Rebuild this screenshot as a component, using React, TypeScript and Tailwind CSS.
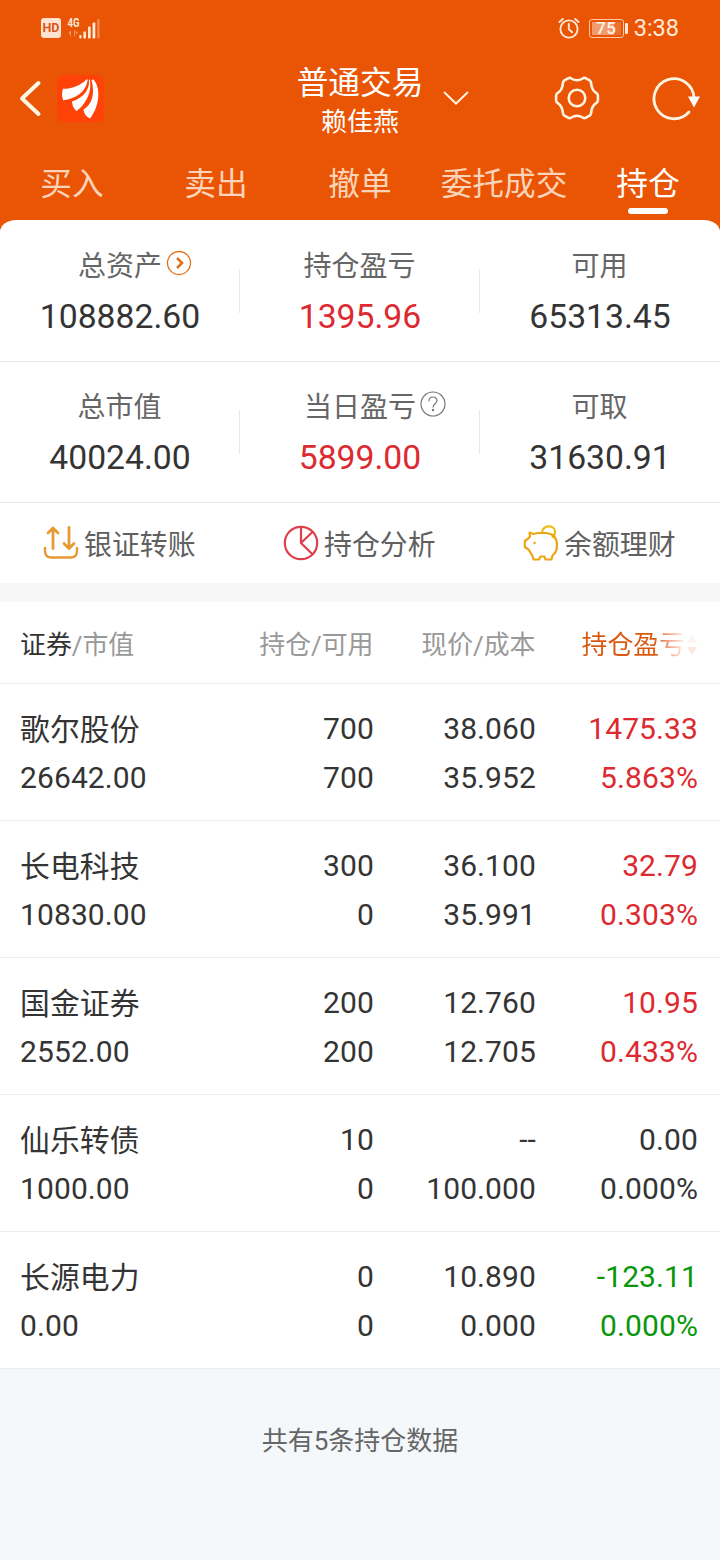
import React from "react";

const tabs = ["买入", "卖出", "撤单", "委托成交", "持仓"];

type Tone = "red" | "green" | "dark";
const toneClass: Record<Tone, string> = {
  red: "text-[#dc2a30]",
  green: "text-[#0a960a]",
  dark: "text-[#343434]",
};

type Holding = {
  name: string;
  value: string;
  held: string;
  free: string;
  price: string;
  cost: string;
  gain: string;
  rate: string;
  tone: Tone;
};

const holdings: Holding[] = [
  { name: "歌尔股份", value: "26642.00", held: "700", free: "700", price: "38.060", cost: "35.952", gain: "1475.33", rate: "5.863%", tone: "red" },
  { name: "长电科技", value: "10830.00", held: "300", free: "0", price: "36.100", cost: "35.991", gain: "32.79", rate: "0.303%", tone: "red" },
  { name: "国金证券", value: "2552.00", held: "200", free: "200", price: "12.760", cost: "12.705", gain: "10.95", rate: "0.433%", tone: "red" },
  { name: "仙乐转债", value: "1000.00", held: "10", free: "0", price: "--", cost: "100.000", gain: "0.00", rate: "0.000%", tone: "dark" },
  { name: "长源电力", value: "0.00", held: "0", free: "0", price: "10.890", cost: "0.000", gain: "-123.11", rate: "0.000%", tone: "green" },
];

function StatusBar() {
  return (
    <div className="flex h-[56px] items-center justify-between pr-[41px] pl-[41px] text-[#ffe9d8]">
      <div className="flex items-center">
        <div className="flex h-5 w-5 items-center justify-center rounded-[3px] bg-[#ffe3d0] text-[12.500px] leading-none font-bold text-[#d4581a]">HD</div>
        <svg className="ml-[6px]" width="35" height="26" viewBox="0 0 35 26" fill="#ffe9d8">
          <text x="0.5" y="11.8" fontSize="12.5" fontWeight="700" fontFamily="Roboto, sans-serif" textLength="12" lengthAdjust="spacingAndGlyphs">4G</text>
          <path d="M1 18.5l3-3.2v5.7H3v-2.5zM7 15.5h1v5.2l-1 1zM10.2 18.5H8.5v-3l3 3z" opacity=".45" />
          <rect x="12.3" y="20" width="2.2" height="3.5" rx=".8" />
          <rect x="16.4" y="16.4" width="2.6" height="7.1" rx=".8" />
          <rect x="21" y="11.6" width="2.7" height="11.9" rx=".8" />
          <rect x="25.6" y="7.6" width="2.7" height="15.9" rx=".8" />
          <rect x="30.2" y="4" width="2.4" height="19.5" rx=".8" opacity=".35" />
        </svg>
      </div>
      <div className="flex items-center">
        <svg width="22" height="22" viewBox="0 0 22 22" fill="none" stroke="#ffe9d8" strokeWidth="1.9" strokeLinecap="round" strokeLinejoin="round">
          <circle cx="11" cy="12" r="8.6" />
          <path d="M10.8 7v5.2l3.4 3M1.5 5l3.3-3M17.2 2l3.3 3" />
        </svg>
        <div className="ml-[9px] flex h-[19px] w-[35px] items-center rounded-[3px] border border-[#ffc9a6] p-[2px]">
          <div className="flex h-full w-[29px] items-center justify-center bg-linear-to-r from-[#f29c6e] from-75% to-[#ec7030] to-75% text-[17px] leading-none font-medium tracking-[0.5px] text-[#fff4ea]">75</div>
        </div>
        <div className="ml-[1px] h-[11px] w-[3px] rounded-[1px] bg-[#ffe9d8]" />
        <div className="ml-[6px] text-[23.500px] leading-7">3:38</div>
      </div>
    </div>
  );
}

function TitleBar() {
  return (
    <div className="grid h-[92px] grid-cols-[1fr_240px_1fr] text-white">
      <div className="flex items-center pb-[6px] pl-[19px]">
        <svg width="24" height="38" viewBox="0 0 24 38" fill="none" stroke="#fff7e6" strokeWidth="4" strokeLinecap="round" strokeLinejoin="round">
          <path d="M19.500 3L3 18.500l16.500 15.500" />
        </svg>
        <svg className="ml-[14px]" width="48" height="48" viewBox="0 0 48 48">
          <rect width="47" height="47" rx="7" fill="#ff4208" />
          <g fill="#fff">
            <path d="M29.500 4.500C23 11 14 14 6 13.800C4.800 17.500 4.600 21.500 6.200 25.300C18 24 29 17.500 30.800 4.500Z" />
            <path d="M32 4.500C33 15 26 23 15 26.500C15.300 30.500 16.500 33.500 19.500 36.200C27 30.500 35.500 19 32.800 4.500Z" />
            <path d="M34.500 5C38.500 20 34.500 29.500 26.500 34.500C27 39 29.500 42 33 43.500C41.500 33 45 14.500 36.500 4.500Z" />
          </g>
        </svg>
      </div>
      <div className="flex justify-center">
        <div className="mr-[-46px] flex items-center">
          <div className="pb-[2px] text-center">
            <div className="pt-[1px] text-[31.700px] leading-[42px]">普通交易</div>
            <div className="text-[26px] leading-[35px]">赖佳燕</div>
          </div>
          <svg className="mt-[-9px] ml-[20px]" width="26" height="16" viewBox="0 0 26 16" fill="none" stroke="#fff4e2" strokeWidth="2">
            <path d="M1 2l12 11.500L25 2" />
          </svg>
        </div>
      </div>
      <div className="flex items-center justify-end pr-[20px] pb-[8px]">
        <svg width="46" height="44" viewBox="0 0 46 44" fill="none" stroke="#fff4e2" strokeWidth="2.600" strokeLinejoin="round">
          <circle cx="23" cy="22" r="8.300" />
          <path d="M14.500 2.100Q16 1.500 17.300 2.500C21 4.800 25 4.800 28.700 2.500Q30 1.500 31.500 2.100L36 4.700Q37 5.500 37.200 7.500C37.500 12 39 15 42.500 17.200Q43.800 18 43.900 19.500V24.500Q43.800 26 42.500 26.800C39 29 37.500 32 37.200 36.500Q37 38.500 36 39.300L31.500 41.900Q30 42.500 28.700 41.500C25 39.200 21 39.200 17.300 41.500Q16 42.500 14.500 41.900L10 39.300Q9 38.500 8.800 36.500C8.500 32 7 29 3.500 26.800Q2.200 26 2.100 24.500V19.500Q2.200 18 3.500 17.200C7 15 8.500 12 8.800 7.500Q9 5.500 10 4.700Z" />
        </svg>
        <svg className="mt-[2px] mr-[-1px] ml-[52px]" width="49" height="44" viewBox="0 0 49 44" fill="none" stroke="#fff4e2" strokeWidth="2.800">
          <path d="M42 21A20 20 0 1 0 37 35" strokeLinecap="round" />
          <path d="M36 19.500h12l-6 11z" fill="#fff" stroke="none" />
        </svg>
      </div>
    </div>
  );
}

function Tabs() {
  return (
    <div className="grid h-[72px] grid-cols-5">
      {tabs.map((tab) => {
        const active = tab === "持仓";
        return (
          <div key={tab} className="flex flex-col items-center pt-[14px]">
            <span className={active ? "text-[31.700px] leading-[46px] text-white" : "text-[31.700px] leading-[46px] text-[#fbd3b8]"}>{tab}</span>
            {active && <span className="h-[6px] w-[40px] rounded-full bg-white" />}
          </div>
        );
      })}
    </div>
  );
}

function ArrowBadge() {
  return (
    <svg width="26" height="26" viewBox="0 0 26 26" fill="none" stroke="#e0711f">
      <circle cx="13" cy="13" r="11.500" strokeWidth="1.300" />
      <path d="M11 8l5 5-5 5" strokeWidth="2.600" />
    </svg>
  );
}

function HelpBadge() {
  return (
    <svg width="26" height="26" viewBox="0 0 26 26" fill="none" stroke="#777" strokeWidth="1.200">
      <circle cx="13" cy="13" r="12" />
      <path d="M9 10.200C9 4.700 17 4.700 17 9.800C17 12.600 13 12.600 13 16.500" />
      <circle cx="13" cy="19" r=".6" fill="#777" />
    </svg>
  );
}

function Metric({ label, value, tone = "dark", badge, divided }: { label: string; value: string; tone?: Tone; badge?: React.ReactNode; divided?: boolean }) {
  return (
    <div className="flex items-center">
      <div className="flex grow flex-col items-center pt-[3px]">
        <div className="flex items-center text-[28px] leading-[40px] text-[#666]">
          <span className="ml-[-1px]">{label}</span>
          {badge && <span className="mr-[-31px] mb-[7px] ml-[4px] leading-none">{badge}</span>}
        </div>
        <div className={`mt-[8px] text-[33.700px] leading-[44px] ${toneClass[tone]}`}>{value}</div>
      </div>
      {divided && <div className="ml-[-1px] h-[44px] w-px bg-[#e8e8e8]" />}
    </div>
  );
}

function TransferIcon() {
  return (
    <svg width="36" height="36" viewBox="0 0 36 36" fill="none" stroke="#e69a32" strokeWidth="2.800" strokeLinecap="round" strokeLinejoin="round">
      <path d="M10 23.500V3M5 8l5-5 5 5M26 2.500V23M21 18.500l5 5 5-5" />
      <path d="M2 23v3Q2 32.500 8.500 32.500H27.500Q34 32.500 34 26V23" strokeWidth="2.400" />
    </svg>
  );
}

function PieIcon() {
  return (
    <svg width="36" height="36" viewBox="0 0 36 36" fill="none" stroke="#df3f49" strokeWidth="2.200" strokeLinejoin="round">
      <circle cx="18" cy="18" r="16.200" />
      <path d="M18 2v16L29.700 29.500M18 18L30 6.500" />
    </svg>
  );
}

function PiggyIcon() {
  return (
    <svg width="36" height="36" viewBox="0 0 36 36" fill="none" stroke="#eba613" strokeWidth="2.200" strokeLinecap="round" strokeLinejoin="round">
      <path d="M19 7.500C20-.5 31.500-.5 32 6.500C32 9 31 11 29.500 12" stroke="#efbd18" />
      <path d="M6.500 7.500L10.500 9Q13 8 17 8H23C30 8.500 34 13 34 20.500C34 25 32 28.500 29.500 30.500L28.500 34.500H22.500L21.500 31.500H17.500L16 34.500H10.500L9.500 31L5.500 24.500L1.800 22V16L5.300 13.500L7 11.500Z" />
      <circle cx="11.500" cy="18" r=".8" fill="#eba613" strokeWidth="1" />
    </svg>
  );
}

function Action({ icon, label }: { icon: React.ReactNode; label: string }) {
  return (
    <div className="flex items-center pl-[43px]">
      {icon}
      <span className="mt-[6px] ml-[5px] text-[27.900px] leading-[40px] text-[#606060]">{label}</span>
    </div>
  );
}

function HoldingRow({ item }: { item: Holding }) {
  const cell = "flex flex-col text-right";
  return (
    <div className="grid h-[137px] grid-cols-[200px_154px_162px_162px] border-b border-[#ececec] pt-[20px] pl-[20px] text-[30px] leading-[49px] tracking-[0.100px] text-[#343434]">
      <div className="flex flex-col">
        <span className="mt-px mb-[-1px] text-[29.800px]">{item.name}</span>
        <span>{item.value}</span>
      </div>
      <div className={cell}>
        <span>{item.held}</span>
        <span>{item.free}</span>
      </div>
      <div className={cell}>
        <span>{item.price}</span>
        <span>{item.cost}</span>
      </div>
      <div className={`${cell} ${toneClass[item.tone]}`}>
        <span>{item.gain}</span>
        <span>{item.rate}</span>
      </div>
    </div>
  );
}

export default function App() {
  return (
    <div className="flex min-h-[1560px] w-[720px] flex-col overflow-hidden bg-[#f5f8fb] font-['Roboto','Noto_Sans_CJK_SC',sans-serif]">
      <header className="h-[240px] shrink-0 bg-[#e95504]">
        <StatusBar />
        <TitleBar />
        <Tabs />
      </header>
      <main className="mt-[-20px] rounded-t-[16px_12px] bg-white">
        <section className="grid h-[142px] grid-cols-3 border-b border-[#e8e8e8] pt-px">
          <Metric label="总资产" value="108882.60" badge={<ArrowBadge />} divided />
          <Metric label="持仓盈亏" value="1395.96" tone="red" divided />
          <Metric label="可用" value="65313.45" />
        </section>
        <section className="grid h-[141px] grid-cols-3 border-b border-[#e8e8e8]">
          <Metric label="总市值" value="40024.00" divided />
          <Metric label="当日盈亏" value="5899.00" tone="red" badge={<HelpBadge />} divided />
          <Metric label="可取" value="31630.91" />
        </section>
        <section className="grid h-[80px] grid-cols-3">
          <Action icon={<TransferIcon />} label="银证转账" />
          <Action icon={<PieIcon />} label="持仓分析" />
          <Action icon={<PiggyIcon />} label="余额理财" />
        </section>
        <div className="h-[19px] bg-[#f7f7f7]" />
        <section>
          <div className="grid h-[82px] grid-cols-[200px_153.500px_162px_184.500px] items-center border-b border-[#ececec] pt-[5px] pl-[20px] text-[25.900px] leading-[40px] text-[#999]">
            <div><span className="text-[#323232]">证券</span>/市值</div>
            <div className="text-right">持仓/可用</div>
            <div className="text-right">现价/成本</div>
            <div className="flex items-center pl-[46px]">
              <span className="bg-linear-to-r from-[#d9580e] from-70% to-[#fff1e8] bg-clip-text text-transparent">持仓盈亏</span>
              <svg className="ml-[1px]" width="12" height="22" viewBox="0 0 12 22">
                <path d="M6 1l5 8H1z" fill="#fbf6f4" />
                <path d="M6 21l5-8H1z" fill="#fbe7dd" />
              </svg>
            </div>
          </div>
          {holdings.map((item) => (
            <HoldingRow key={item.name} item={item} />
          ))}
        </section>
      </main>
      <footer className="pt-[52px] text-center text-[26px] leading-[40px] text-[#666]">共有5条持仓数据</footer>
    </div>
  );
}
